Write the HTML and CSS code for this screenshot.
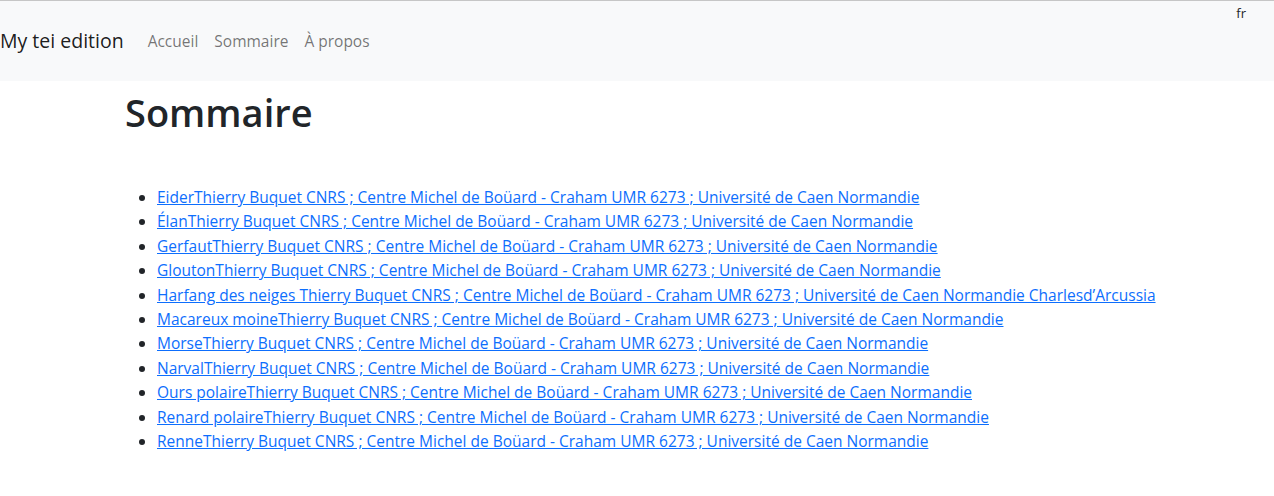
FILE: index.html
```html
<!DOCTYPE html>
<html lang="fr">
<head>
<meta charset="utf-8">
<title>Sommaire</title>
<link rel="stylesheet" href="styles.css">
</head>
<body>
<nav class="navbar">
  <div class="lang-row"><span class="lang">fr</span></div>
  <div class="nav-main">
    <a class="brand" href="#">My tei edition</a>
    <ul class="nav-links">
      <li><a href="#">Accueil</a></li>
      <li><a href="#">Sommaire</a></li>
      <li><a href="#">À propos</a></li>
    </ul>
  </div>
</nav>
<main class="container">
  <h1 class="title">Sommaire</h1>
  <ul class="toc">
    <li><a href="#">EiderThierry Buquet CNRS ; Centre Michel de Boüard - Craham UMR 6273 ; Université de Caen Normandie</a></li>
    <li><a href="#">ÉlanThierry Buquet CNRS ; Centre Michel de Boüard - Craham UMR 6273 ; Université de Caen Normandie</a></li>
    <li><a href="#">GerfautThierry Buquet CNRS ; Centre Michel de Boüard - Craham UMR 6273 ; Université de Caen Normandie</a></li>
    <li><a href="#">GloutonThierry Buquet CNRS ; Centre Michel de Boüard - Craham UMR 6273 ; Université de Caen Normandie</a></li>
    <li><a href="#">Harfang des neiges Thierry Buquet CNRS ; Centre Michel de Boüard - Craham UMR 6273 ; Université de Caen Normandie Charlesd’Arcussia</a></li>
    <li><a href="#">Macareux moineThierry Buquet CNRS ; Centre Michel de Boüard - Craham UMR 6273 ; Université de Caen Normandie</a></li>
    <li><a href="#">MorseThierry Buquet CNRS ; Centre Michel de Boüard - Craham UMR 6273 ; Université de Caen Normandie</a></li>
    <li><a href="#">NarvalThierry Buquet CNRS ; Centre Michel de Boüard - Craham UMR 6273 ; Université de Caen Normandie</a></li>
    <li><a href="#">Ours polaireThierry Buquet CNRS ; Centre Michel de Boüard - Craham UMR 6273 ; Université de Caen Normandie</a></li>
    <li><a href="#">Renard polaireThierry Buquet CNRS ; Centre Michel de Boüard - Craham UMR 6273 ; Université de Caen Normandie</a></li>
    <li><a href="#">RenneThierry Buquet CNRS ; Centre Michel de Boüard - Craham UMR 6273 ; Université de Caen Normandie</a></li>
  </ul>
</main>
</body>
</html>
```
FILE: styles.css
```css
* { box-sizing: border-box; }
body {
  margin: 0;
  font-family: "Open Sans", "Noto Sans", sans-serif;
  font-size: 15.5px;
  line-height: 24px;
  color: #212529;
  background: #fff;
}
.navbar {
  border-top: 1px solid #c6c6c6;
  background: #f8f9fa;
  height: 81px;
}
.lang-row {
  display: flex;
  justify-content: flex-end;
  padding-right: 28px;
  height: 24px;
  font-size: 13px;
  line-height: 24px;
  color: #212529;
}
.nav-main {
  display: flex;
  align-items: center;
  height: 32px;
}
.brand {
  font-size: 19.5px;
  line-height: 30px;
  color: rgba(0,0,0,.9);
  text-decoration: none;
  margin-right: 16px;
}
.nav-links {
  display: flex;
  list-style: none;
  margin: 0;
  padding: 0;
}
.nav-links a {
  display: block;
  padding: 8px;
  color: rgba(0,0,0,.55);
  text-decoration: none;
}
.container {
  padding: 0 12px 0 125px;
}
.title {
  font-size: 38px;
  font-weight: 600;
  line-height: 48px;
  margin: 7px 0 49px;
}
.toc {
  margin: 0;
  padding-left: 32px;
}
.toc li {
  line-height: 24.4px;
}
.toc a {
  color: #0d6efd;
  text-decoration: underline;
}
```
